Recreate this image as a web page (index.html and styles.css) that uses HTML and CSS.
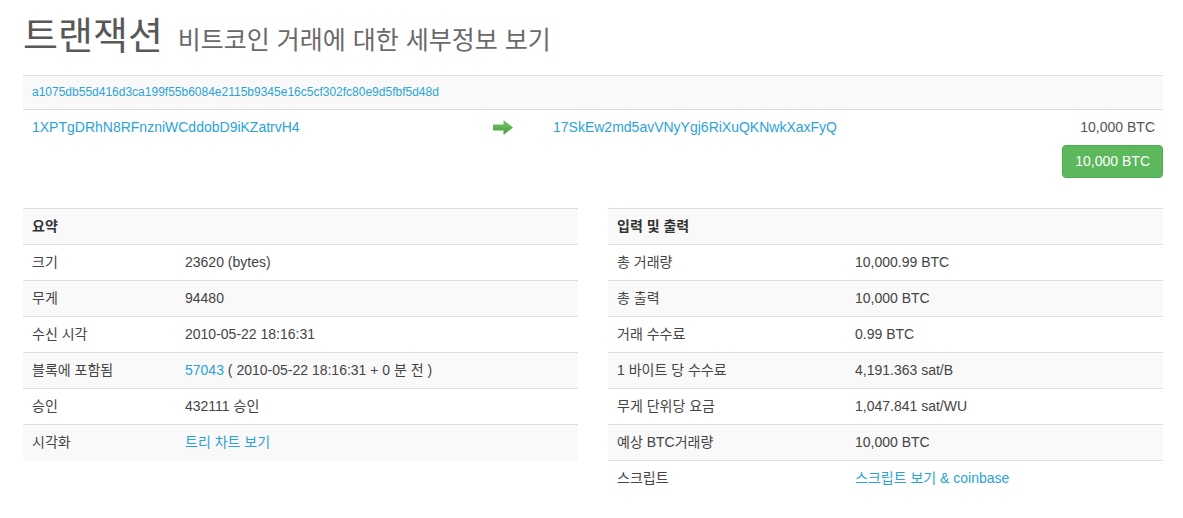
FILE: index.html
```html
<!DOCTYPE html>
<html lang="ko">
<head>
<meta charset="utf-8">
<title>트랜잭션</title>
<link rel="stylesheet" href="styles.css">
</head>
<body>
<div class="container">
  <h1 class="page-title">트랜잭션 <small>비트코인 거래에 대한 세부정보 보기</small></h1>

  <div class="tx-box">
    <div class="tx-hash"><a href="#">a1075db55d416d3ca199f55b6084e2115b9345e16c5cf302fc80e9d5fbf5d48d</a></div>
    <div class="tx-flow">
      <div class="tx-in"><a href="#">1XPTgDRhN8RFnzniWCddobD9iKZatrvH4</a></div>
      <div class="tx-arrow">
        <svg width="20" height="15" viewBox="0 0 20 15">
          <defs>
            <linearGradient id="arrowFill" x1="0" y1="0" x2="0" y2="1">
              <stop offset="0" stop-color="#7cc56a"/>
              <stop offset="1" stop-color="#43a03a"/>
            </linearGradient>
          </defs>
          <path d="M0 4.5 H10.5 V0 L20 7.5 L10.5 15 V10.5 H0 Z" fill="url(#arrowFill)"/>
        </svg>
      </div>
      <div class="tx-out"><a href="#">17SkEw2md5avVNyYgj6RiXuQKNwkXaxFyQ</a></div>
      <div class="tx-amount">10,000 BTC</div>
    </div>
    <div class="tx-total"><span class="btn-total">10,000 BTC</span></div>
  </div>

  <div class="panels">
    <table class="info-table summary">
      <tr><th colspan="2">요약</th></tr>
      <tr><td>크기</td><td>23620 (bytes)</td></tr>
      <tr><td>무게</td><td>94480</td></tr>
      <tr><td>수신 시각</td><td>2010-05-22 18:16:31</td></tr>
      <tr><td>블록에 포함됨</td><td><a href="#">57043</a> ( 2010-05-22 18:16:31 + 0 분 전 )</td></tr>
      <tr><td>승인</td><td>432111 승인</td></tr>
      <tr><td>시각화</td><td><a href="#">트리 차트 보기</a></td></tr>
    </table>

    <table class="info-table io">
      <tr><th colspan="2">입력 및 출력</th></tr>
      <tr><td>총 거래량</td><td>10,000.99 BTC</td></tr>
      <tr><td>총 출력</td><td>10,000 BTC</td></tr>
      <tr><td>거래 수수료</td><td>0.99 BTC</td></tr>
      <tr><td>1 바이트 당 수수료</td><td>4,191.363 sat/B</td></tr>
      <tr><td>무게 단위당 요금</td><td>1,047.841 sat/WU</td></tr>
      <tr><td>예상 BTC거래량</td><td>10,000 BTC</td></tr>
      <tr><td>스크립트</td><td><a href="#">스크립트 보기 &amp; coinbase</a></td></tr>
    </table>
  </div>
</div>
</body>
</html>
```

FILE: styles.css
```css
* {
  box-sizing: border-box;
}

body {
  margin: 0;
  background: #fff;
  color: #444;
  font-family: "Liberation Sans", Arial, "Noto Sans CJK KR", sans-serif;
  font-size: 14px;
  line-height: 19px;
}

a {
  color: #2ba3d6;
  text-decoration: none;
}

.container {
  width: 1140px;
  margin-left: 23px;
}

/* heading */
.page-title {
  display: flex;
  align-items: baseline;
  gap: 15px;
  height: 40px;
  margin: 16px 0 19px;
  font-family: "Liberation Sans", "Noto Sans CJK KR", sans-serif;
  font-size: 38px;
  font-weight: normal;
  line-height: 40px;
  color: #585858;
}

.page-title small {
  font-size: 25px;
  line-height: 30px;
  color: #6a6a6a;
}

/* transaction summary box */
.tx-box {
  display: flex;
  flex-direction: column;
}

.tx-hash {
  background: #f9f9f9;
  border-top: 1px solid #ddd;
  border-bottom: 1px solid #ddd;
  padding: 8px 8px 8px 9px;
  font-size: 12px;
  line-height: 17px;
}

.tx-flow {
  display: grid;
  grid-template-columns: 462px 60px 1fr auto;
  padding: 8px 0;
  height: 35px;
}

.tx-in {
  padding-left: 9px;
}

.tx-arrow {
  padding: 2px 0 0 8px;
  line-height: 0;
}

.tx-out {
  padding-left: 8px;
}

.tx-amount {
  padding-right: 8px;
  color: #555;
  text-align: right;
}

.tx-total {
  display: flex;
  justify-content: flex-end;
}

.btn-total {
  display: inline-block;
  background: #5cb85c;
  border: 1px solid #4cae4c;
  border-radius: 4px;
  color: #fff;
  padding: 6px 12px;
  line-height: 19px;
  height: 33px;
}

/* detail tables */
.panels {
  display: flex;
  gap: 30px;
  margin-top: 30px;
}

.info-table {
  width: 555px;
  border-collapse: collapse;
  border-spacing: 0;
  align-self: flex-start;
}

.info-table th,
.info-table td {
  padding: 8px 8px 8px 9px;
  height: 36px;
  border-top: 1px solid #ddd;
  text-align: left;
  vertical-align: top;
  line-height: 19px;
}

.info-table th {
  font-weight: bold;
  color: #333;
}

.info-table tr:nth-child(odd) {
  background: #f9f9f9;
}

.summary td:first-child {
  width: 153px;
}

.io td:first-child {
  width: 238px;
}
```
